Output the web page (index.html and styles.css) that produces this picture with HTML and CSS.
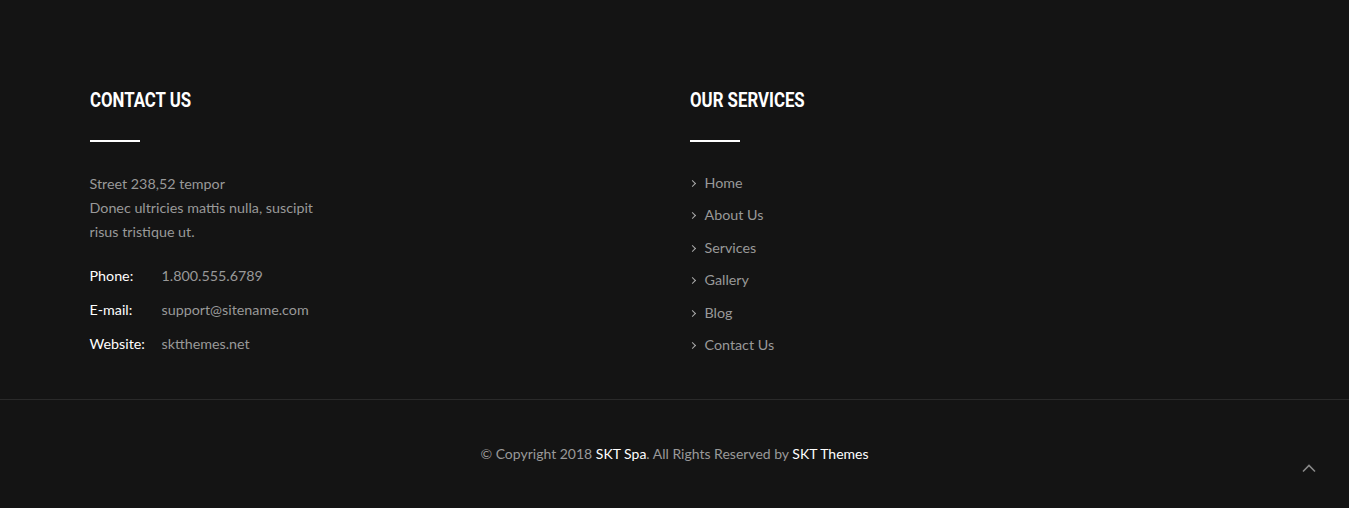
FILE: index.html
```html
<!DOCTYPE html>
<html lang="en">
<head>
    <meta charset="UTF-8">
    <title>Footer</title>
    <link rel="stylesheet" href="styles.css">
</head>
<body>
<div class="footer">
    <div class="container">
        <div class="col">
            <h2><span>Contact Us</span></h2>
            <div class="line"></div>
            <p class="address">Street 238,52 tempor<br>Donec ultricies mattis nulla, suscipit<br>risus tristique ut.</p>
            <ul class="info">
                <li><span class="label">Phone:</span><span>1.800.555.6789</span></li>
                <li><span class="label">E-mail:</span><a href="#">support@sitename.com</a></li>
                <li><span class="label">Website:</span><a href="#">sktthemes.net</a></li>
            </ul>
        </div>
        <div class="col">
            <h2><span>Our Services</span></h2>
            <div class="line"></div>
            <ul class="menu">
                <li><a href="#">Home</a></li>
                <li><a href="#">About Us</a></li>
                <li><a href="#">Services</a></li>
                <li><a href="#">Gallery</a></li>
                <li><a href="#">Blog</a></li>
                <li><a href="#">Contact Us</a></li>
            </ul>
        </div>
    </div>
</div>
<div class="copyright">
    &copy; Copyright 2018 <a href="#">SKT Spa</a>. All Rights Reserved by <a href="#">SKT Themes</a>
    <a href="#" class="top"><svg width="16" height="10" viewBox="0 0 16 10"><path d="M2 8.5 L8 2.5 L14 8.5" fill="none" stroke="#888" stroke-width="1.6"/></svg></a>
</div>
</body>
</html>
```

FILE: styles.css
```css
* {
    padding: 0;
    margin: 0;
    list-style: none;
    border: 0;
}

body {
    background: #141414;
    font-family: Lato, "Liberation Sans", sans-serif;
    font-size: 14.3px;
    color: #999;
}

a {
    color: #999;
    text-decoration: none;
}

.footer {
    padding-top: 88px;
    padding-bottom: 38px;
    border-bottom: 1px solid #2a2a2a;
}

.container {
    width: 1170px;
    margin: 0 auto;
    display: flex;
}

.col {
    width: 600px;
    flex-shrink: 0;
}

.col + .col {
    width: 570px;
}

.col h2 {
    font-family: Roboto, "Liberation Sans", sans-serif;
    font-size: 21px;
    font-weight: bold;
    color: #fff;
    text-transform: uppercase;
    line-height: 24px;
}

.col h2 span {
    display: inline-block;
    transform: scaleX(0.8);
    transform-origin: left;
}

.line {
    width: 50px;
    height: 2px;
    background: #fff;
    margin: 28px 0 30px;
}

.address {
    line-height: 24px;
}

.info {
    margin-top: 15px;
}

.info li {
    display: flex;
    line-height: 34px;
}

.info .label {
    width: 72px;
    color: #fff;
}

.menu li {
    line-height: 32.4px;
    padding-left: 15px;
    position: relative;
}

.menu li:first-child {
    margin-top: -5px;
}

.menu li:before {
    content: "";
    position: absolute;
    left: 0;
    top: 14px;
    width: 4px;
    height: 4px;
    border-top: 1px solid #aaa;
    border-right: 1px solid #aaa;
    transform: rotate(45deg);
}

.copyright {
    text-align: center;
    padding: 44px 0 45px;
    line-height: 20px;
    font-size: 14px;
    position: relative;
}

.copyright a {
    color: #fff;
}

.copyright .top {
    position: absolute;
    right: 32px;
    top: 58px;
}
```
